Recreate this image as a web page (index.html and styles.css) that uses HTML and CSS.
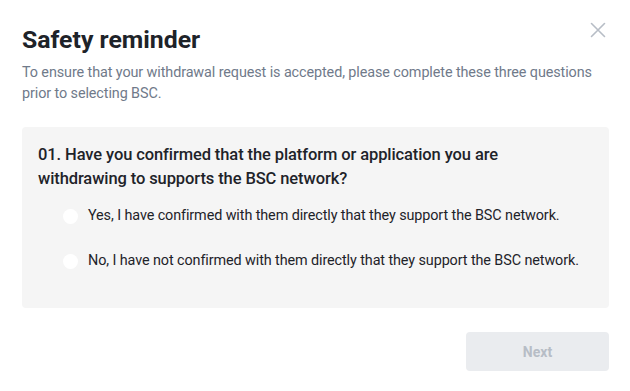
FILE: index.html
```html
<!DOCTYPE html>
<html>
<head>
<meta charset="utf-8">
<link rel="stylesheet" href="styles.css">
</head>
<body>
<div class="modal">
  <div class="header">
    <h1 class="title">Safety reminder</h1>
    <button class="close" aria-label="Close">
      <svg width="16" height="16" viewBox="0 0 16 16"><path d="M1.5 1.5L14.5 14.5M14.5 1.5L1.5 14.5" stroke="#b7bdc6" stroke-width="1.6" stroke-linecap="round"/></svg>
    </button>
  </div>
  <p class="desc">To ensure that your withdrawal request is accepted, please complete these three questions prior to selecting BSC.</p>
  <div class="question">
    <div class="q-title">01. Have you confirmed that the platform or application you are withdrawing to supports the BSC network?</div>
    <label class="option"><span class="radio"></span><span>Yes, I have confirmed with them directly that they support the BSC network.</span></label>
    <label class="option"><span class="radio"></span><span>No, I have not confirmed with them directly that they support the BSC network.</span></label>
  </div>
  <div class="footer">
    <button class="next">Next</button>
  </div>
</div>
</body>
</html>
```

FILE: styles.css
```css
* { box-sizing: border-box; }
html, body { margin: 0; padding: 0; background: #fff; }
body { font-family: Roboto, "Noto Sans", sans-serif; color: #1e2329; }
.modal { width: 630px; height: 391px; padding: 20px 21px 0 22px; }
.header { display: flex; justify-content: space-between; align-items: flex-start; }
.title { margin: 6px 0 0; font-size: 24.8px; font-weight: 700; line-height: 28px; letter-spacing: 0; }
.close { border: 0; background: none; padding: 0; margin: 2px 3px 0 0; width: 16px; height: 16px; }
.desc { margin: 8px 0 0; font-size: 14.4px; line-height: 21px; color: #707a8a; letter-spacing: -0.1px; }
.question { margin-top: 23px; background: #f5f5f5; border-radius: 4px; padding: 16px 16px 28px; height: 181px; }
.q-title { font-size: 16.5px; font-weight: 500; line-height: 23.5px; letter-spacing: -0.1px; padding-right: 90px; }
.option { display: flex; align-items: center; gap: 10px; font-size: 14.4px; line-height: 20px; margin-left: 25px; letter-spacing: -0.1px; }
.option:first-of-type { margin-top: 16px; }
.option + .option { margin-top: 25px; }
.radio { width: 15px; height: 15px; border-radius: 50%; background: #fff; flex: none; }
.footer { display: flex; justify-content: flex-end; margin-top: 24px; }
.next { width: 143px; height: 39px; border: 0; border-radius: 4px; background: #eaecef; color: #b7bdc6; font-family: inherit; font-size: 14px; font-weight: 700; }
```
